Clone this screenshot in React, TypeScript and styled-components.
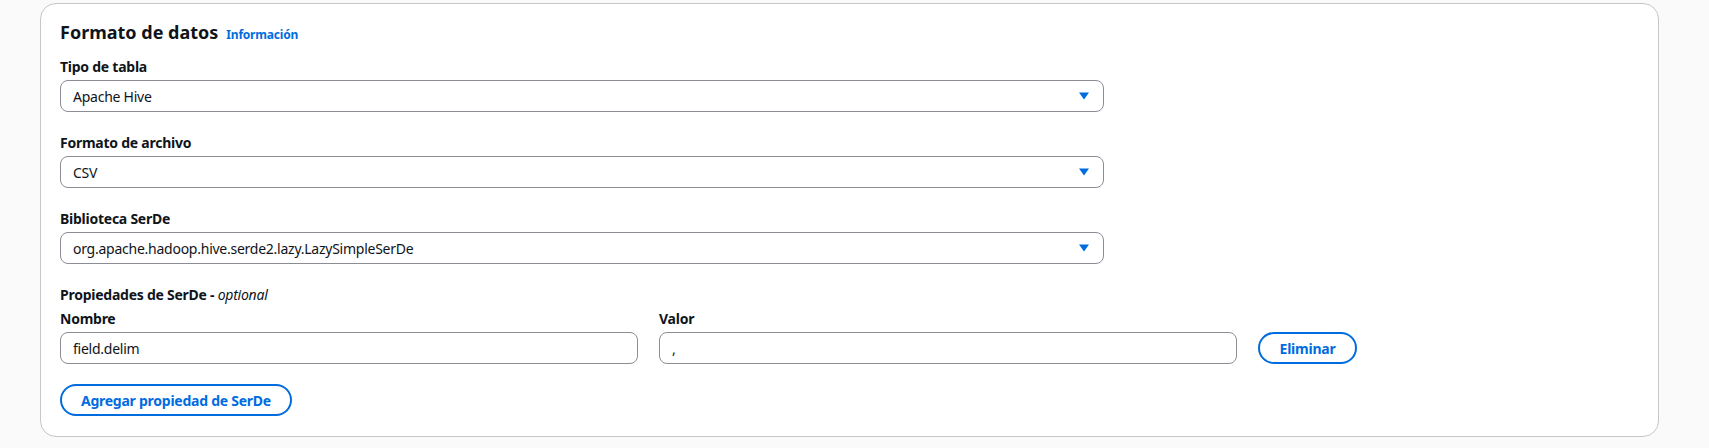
import React from "react";
import styled, { createGlobalStyle } from "styled-components";

const GlobalStyle = createGlobalStyle`
  html, body {
    margin: 0;
    padding: 0;
    background: #fafafa;
  }
  body {
    font-family: "Noto Sans", "Open Sans", sans-serif;
    color: #0f141a;
  }
`;

const Page = styled.div`
  padding: 3px 50px 10px 40px;
`;

const Card = styled.section`
  background: #ffffff;
  border: 1px solid #c6c6cd;
  border-radius: 16px;
  padding: 17px 19px 20px 19px;
`;

const Header = styled.div`
  display: flex;
  align-items: baseline;
  gap: 8px;
  height: 22px;
  margin-bottom: 15px;
`;

const Title = styled.h2`
  margin: 0;
  font-size: 18px;
  line-height: 22px;
  font-weight: 700;
  color: #0f141a;
`;

const InfoLink = styled.a`
  font-size: 12px;
  line-height: 16px;
  font-weight: 700;
  letter-spacing: -0.2px;
  color: #006ce0;
  text-decoration: none;
`;

const Field = styled.div`
  display: flex;
  flex-direction: column;
  margin-bottom: 22px;
  width: 1044px;
`;

const Label = styled.label`
  font-size: 14px;
  line-height: 18px;
  font-weight: 700;
  letter-spacing: -0.25px;
  color: #0f141a;
  margin-bottom: 4px;
`;

const Optional = styled.i`
  font-weight: 400;
`;

const SelectBox = styled.div`
  box-sizing: border-box;
  height: 32px;
  border: 1px solid #8c8c94;
  border-radius: 8px;
  display: flex;
  align-items: center;
  justify-content: space-between;
  padding: 0 14px 0 12px;
  font-size: 14px;
  letter-spacing: -0.25px;
  color: #0f141a;
`;

const Caret = styled.svg`
  width: 10px;
  height: 8px;
  fill: #006ce0;
`;

const GroupLabel = styled.div`
  font-size: 14px;
  line-height: 18px;
  font-weight: 700;
  letter-spacing: -0.25px;
  margin-bottom: 6px;
`;

const PropRow = styled.div`
  display: flex;
  align-items: flex-end;
  gap: 21px;
  margin-bottom: 20px;
`;

const PropCol = styled.div`
  display: flex;
  flex-direction: column;
  width: 578px;
`;

const TextInput = styled.div`
  box-sizing: border-box;
  height: 32px;
  border: 1px solid #8c8c94;
  border-radius: 8px;
  display: flex;
  align-items: center;
  padding: 0 12px;
  font-size: 14px;
  letter-spacing: -0.25px;
  color: #0f141a;
`;

const Button = styled.button<{ $w: number }>`
  box-sizing: border-box;
  display: block;
  height: 32px;
  width: ${(p) => p.$w}px;
  border: 2px solid #006ce0;
  border-radius: 20px;
  background: #ffffff;
  color: #006ce0;
  font-family: "Noto Sans", "Open Sans", sans-serif;
  font-size: 14px;
  font-weight: 700;
  letter-spacing: -0.25px;
  padding: 0;
  white-space: nowrap;
  cursor: pointer;
`;

const CaretIcon = () => (
  <Caret viewBox="0 0 10 8">
    <polygon points="0,0.5 10,0.5 5,7.5" />
  </Caret>
);

const Select = ({ value }: { value: string }) => (
  <SelectBox>
    <span>{value}</span>
    <CaretIcon />
  </SelectBox>
);

export default function App() {
  return (
    <>
      <GlobalStyle />
      <Page>
        <Card>
          <Header>
            <Title>Formato de datos</Title>
            <InfoLink href="#">Información</InfoLink>
          </Header>
          <Field>
            <Label>Tipo de tabla</Label>
            <Select value="Apache Hive" />
          </Field>
          <Field>
            <Label>Formato de archivo</Label>
            <Select value="CSV" />
          </Field>
          <Field>
            <Label>Biblioteca SerDe</Label>
            <Select value="org.apache.hadoop.hive.serde2.lazy.LazySimpleSerDe" />
          </Field>
          <GroupLabel>
            Propiedades de SerDe - <Optional>optional</Optional>
          </GroupLabel>
          <PropRow>
            <PropCol>
              <Label>Nombre</Label>
              <TextInput>field.delim</TextInput>
            </PropCol>
            <PropCol>
              <Label>Valor</Label>
              <TextInput>,</TextInput>
            </PropCol>
            <Button $w={99}>Eliminar</Button>
          </PropRow>
          <Button $w={232}>Agregar propiedad de SerDe</Button>
        </Card>
      </Page>
    </>
  );
}
